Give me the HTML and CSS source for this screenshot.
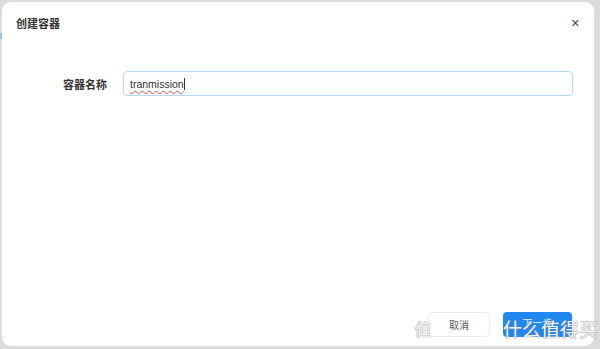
FILE: index.html
```html
<!DOCTYPE html>
<html lang="zh-CN">
  <head>
    <meta charset="UTF-8" />
    <title>创建容器</title>
    <link rel="stylesheet" href="styles.css">
  </head>
  <body>
    <span class="edge-mark"></span>
    <div class="dialog">
      <div class="dialog-header">
        <span class="dialog-title">创建容器</span>
        <span class="dialog-close">&#x2715;</span>
      </div>
      <div class="dialog-body">
        <div class="form-row">
          <label class="form-label">容器名称</label>
          <div class="form-input"><span class="typed">tranmission</span><span class="caret"></span></div>
        </div>
      </div>
      <div class="dialog-footer">
        <button class="btn btn-default">取消</button>
        <button class="btn btn-primary">下一步</button>
      </div>
    </div>
    <div class="watermark"><span class="wm-badge">值</span><span class="wm-text">什么值得买</span></div>
  </body>
</html>
```

FILE: styles.css
```css
* {
  box-sizing: border-box;
}
body {
  margin: 0;
  width: 600px;
  height: 349px;
  background: #dcdcdc;
  font-family: "Noto Sans CJK SC", "Noto Sans", sans-serif;
  overflow: hidden;
  position: relative;
  padding: 2px 6px 3px 2px;
}

.edge-mark {
  position: absolute;
  left: 0;
  top: 33px;
  width: 2px;
  height: 6px;
  background: #9cc4e4;
}

.dialog {
  height: 344px;
  background: #fff;
  border-radius: 9px;
  display: flex;
  flex-direction: column;
}

.dialog-header {
  display: flex;
  justify-content: space-between;
  align-items: center;
  padding: 10px 14px 0 14px;
  height: 32px;
}
.dialog-title {
  font-size: 11px;
  font-weight: 700;
  color: #333;
}
.dialog-close {
  font-size: 11px;
  font-weight: 700;
  color: #444;
  font-family: "DejaVu Sans", sans-serif;
}

.dialog-body {
  flex: 1;
  padding-top: 37px;
}

.form-row {
  display: flex;
  align-items: center;
  padding-right: 21px;
}
.form-label {
  width: 106px;
  text-align: right;
  font-size: 11px;
  font-weight: 700;
  color: #333;
  padding-right: 1px;
}
.form-input {
  flex: 1;
  margin-left: 15px;
  height: 25px;
  border: 1px solid #b4d9f0;
  border-radius: 4px;
  background: #fdfefe;
  display: flex;
  align-items: center;
  padding-left: 6px;
  font-family: "Liberation Sans", sans-serif;
  font-size: 10.5px;
  color: #333;
}
.typed {
  text-decoration: underline wavy #e05050;
  text-decoration-thickness: 1px;
  text-underline-offset: 2px;
}
.caret {
  width: 1px;
  height: 12px;
  background: #333;
}

.dialog-footer {
  display: flex;
  justify-content: flex-end;
  gap: 13px;
  padding: 0 22px 9px 0;
}
.btn {
  height: 25px;
  border-radius: 4px;
  font-family: inherit;
  font-size: 10px;
  cursor: pointer;
}
.btn-default {
  width: 62px;
  background: #fff;
  border: 1px solid #ececec;
  color: #555;
}
.btn-primary {
  width: 69px;
  background: #2188f0;
  border: none;
  color: #e8f2fc;
  padding-bottom: 6px;
}

.watermark {
  position: absolute;
  left: 412px;
  top: 316px;
  display: flex;
  align-items: center;
  white-space: nowrap;
  pointer-events: none;
}
.wm-badge {
  width: 22px;
  height: 26px;
  font-size: 17px;
  line-height: 26px;
  text-align: center;
  color: rgba(255, 255, 255, 0.85);
  text-shadow: 0 0 1px #999, 0 0 1px #999;
}
.wm-text {
  font-size: 19px;
  line-height: 26px;
  color: rgba(255, 255, 255, 0.9);
  text-shadow: 0 0 1px #888, 0 0 1px #888;
  margin-left: 69px;
}
```
